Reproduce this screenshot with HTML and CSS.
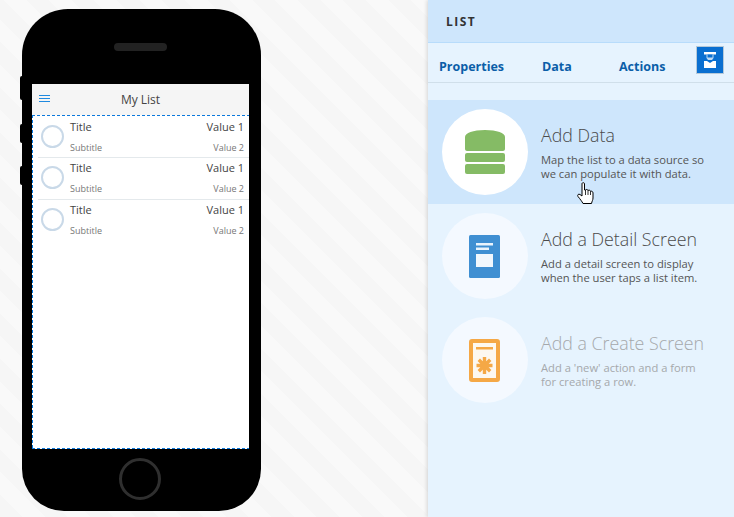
FILE: index.html
```html
<!DOCTYPE html>
<html lang="en">
<head>
    <meta charset="UTF-8">
    <meta name="viewport" content="width=device-width, initial-scale=1.0">
    <title>My List</title>
    <link rel="stylesheet" href="styles.css">
</head>
<body>
    <div class="stage">
        <div class="phone">
            <span class="side-btn side-btn-1"></span>
            <span class="side-btn side-btn-2"></span>
            <span class="side-btn side-btn-3"></span>
            <div class="speaker"></div>
            <div class="screen">
                <div class="screen-head">
                    <span class="menu-icon"><i></i><i></i><i></i></span>
                    <span class="screen-title">My List</span>
                </div>
                <div class="list">
                    <div class="row">
                        <span class="avatar"></span>
                        <div class="row-text">
                            <div class="row-line"><span>Title</span><span>Value 1</span></div>
                            <div class="row-line row-sub"><span>Subtitle</span><span>Value 2</span></div>
                        </div>
                    </div>
                    <div class="row">
                        <span class="avatar"></span>
                        <div class="row-text">
                            <div class="row-line"><span>Title</span><span>Value 1</span></div>
                            <div class="row-line row-sub"><span>Subtitle</span><span>Value 2</span></div>
                        </div>
                    </div>
                    <div class="row">
                        <span class="avatar"></span>
                        <div class="row-text">
                            <div class="row-line"><span>Title</span><span>Value 1</span></div>
                            <div class="row-line row-sub"><span>Subtitle</span><span>Value 2</span></div>
                        </div>
                    </div>
                </div>
            </div>
            <div class="home-btn"></div>
        </div>
    </div>

    <div class="panel">
        <div class="panel-head">LIST</div>
        <div class="tabs">
            <a class="tab tab-props">Properties</a>
            <a class="tab tab-data">Data</a>
            <a class="tab tab-actions">Actions</a>
            <button class="tab-icon">
                <svg width="12" height="16" viewBox="0 0 12 16">
                    <path d="M0 0h12v2.500h-12z" fill="#fff"/>
                    <path d="M2.500 2.500h7v3.500l-1.500 2h-4l-1.500-2z" fill="#bcd9f4"/>
                    <path d="M3.500 2.500h5v3h-5z" fill="#0a6fd0"/>
                    <path d="M0 9h3l3 2 3-2h3v7h-12z" fill="#fff"/>
                </svg>
            </button>
        </div>

        <div class="actions">
            <div class="action action-active">
                <div class="action-circle">
                    <svg width="40" height="44" viewBox="0 0 40 44">
                        <path d="M0 19v-12c0-4 8-7 20-7s20 3 20 7v12c0 1-1 2-2 2h-36c-1 0-2-1-2-2z" fill="#85bb65"/>
                        <rect x="0" y="23" width="40" height="9" rx="2" fill="#85bb65"/>
                        <rect x="0" y="34" width="40" height="10" rx="2" fill="#85bb65"/>
                    </svg>
                </div>
                <div class="action-text">
                    <h3>Add Data</h3>
                    <p>Map the list to a data source so<br>we can populate it with data.</p>
                </div>
            </div>

            <div class="action">
                <div class="action-circle">
                    <svg class="doc-icon" width="31" height="43" viewBox="0 0 31 43">
                        <rect width="31" height="43" rx="1.500" fill="#3f8fd2"/>
                        <rect x="7" y="8" width="17" height="2.500" fill="#e9f3fc"/>
                        <rect x="7" y="12.500" width="13" height="2.500" fill="#e9f3fc"/>
                        <rect x="7" y="19" width="17" height="13" fill="#f1f7fd"/>
                    </svg>
                </div>
                <div class="action-text">
                    <h3>Add a Detail Screen</h3>
                    <p>Add a detail screen to display<br>when the user taps a list item.</p>
                </div>
            </div>

            <div class="action action-disabled">
                <div class="action-circle">
                    <svg class="doc-icon" width="31" height="43" viewBox="0 0 31 43">
                        <rect x="2" y="2" width="27" height="39" rx="1" fill="#fdf8f0" stroke="#f5a846" stroke-width="4"/>
                        <rect x="7" y="8" width="17" height="2.500" fill="#f5a846"/>
                        <g stroke="#f5a846" stroke-width="3.400">
                            <path d="M15.500 18v17M7.500 26.500h16M9.800 20.800l11.400 11.400M21.200 20.800l-11.400 11.400"/>
                        </g>
                    </svg>
                </div>
                <div class="action-text">
                    <h3>Add a Create Screen</h3>
                    <p>Add a 'new' action and a form<br>for creating a row.</p>
                </div>
            </div>
        </div>

        <svg class="cursor" width="18" height="23" viewBox="0 0 18 23">
            <path d="M5 1.500c0-1 2.500-1 2.500 0v6.500l1 0c1-1 2.300-.5 2.500.5 1-.7 2.300-.3 2.500.8 1.200-.5 2.500.2 2.500 1.700v5c0 2-1 3-1.500 5.500h-8.500c-1-2-3-4.500-5-7-1-1.500.5-3 2-2l2 1.500z" fill="#fff" stroke="#000" stroke-width="1"/>
            <path d="M8.500 8v5M11 8.500v4.500M13.500 9.300v3.700" stroke="#000" stroke-width=".8" fill="none"/>
        </svg>
    </div>
</body>
</html>
```

FILE: styles.css
```css
* {
    box-sizing: border-box;
}
html, body {
    height: 100%;
}
body {
    margin: 0;
    display: flex;
    overflow: hidden;
    font-family: "Open Sans", "Noto Sans", Arial, sans-serif;
    color: #333;
}

/* left side with the phone */
.stage {
    width: 428px;
    height: 517px;
    padding: 9px 0 0 22px;
    background: repeating-linear-gradient(45deg, #f6f6f6 0, #f6f6f6 16px, #f9f9f9 16px, #f9f9f9 32px);
}
.phone {
    position: relative;
    width: 239px;
    height: 502px;
    padding: 34px 0 0 10px;
    background: #000;
    border-radius: 46px 46px 42px 42px;
}
.side-btn {
    position: absolute;
    left: -2px;
    width: 2px;
    background: #000;
    border-radius: 2px 0 0 2px;
}
.side-btn-1 {
    top: 67px;
    height: 24px;
}
.side-btn-2 {
    top: 115px;
    height: 19px;
}
.side-btn-3 {
    top: 157px;
    height: 19px;
}
.speaker {
    width: 53px;
    height: 8px;
    margin-left: 82px;
    background: #222;
    border-radius: 4px;
}
.screen {
    width: 217px;
    height: 365px;
    margin-top: 33px;
    background: #fff;
    overflow: hidden;
}
.screen-head {
    display: flex;
    align-items: center;
    justify-content: center;
    position: relative;
    height: 31px;
    background: #f5f5f5;
}
.screen-title {
    font-size: 12px;
    color: #444;
}
.menu-icon {
    position: absolute;
    left: 7px;
    top: 11px;
    width: 11px;
}
.menu-icon i {
    display: block;
    height: 1px;
    margin-bottom: 2px;
    background: #1f8ae0;
}
/* selection outline, drawn so the dash length is 3 on / 2 off */
.list {
    height: 334px;
    padding: 2px 0 0 1px;
    background:
        repeating-linear-gradient(90deg, #0a78dc 0 3px, transparent 3px 5px) top / 100% 1px no-repeat,
        repeating-linear-gradient(90deg, #0a78dc 0 3px, transparent 3px 5px) bottom / 100% 1px no-repeat,
        repeating-linear-gradient(180deg, #0a78dc 0 3px, transparent 3px 5px) left / 1px 100% no-repeat;
}
.row {
    display: flex;
    height: 41.3px;
    margin-left: 5px;
    padding-right: 5px;
    border-bottom: 1px solid #e4e9ec;
}
.row:last-child {
    border-bottom: none;
}
.avatar {
    flex: none;
    width: 23px;
    height: 23px;
    margin: 8px 6px 0 3px;
    border: 2px solid #c9d9e8;
    border-radius: 50%;
}
.row-text {
    flex: 1;
    padding-top: 2px;
}
.row-line {
    display: flex;
    justify-content: space-between;
    height: 16px;
    line-height: 16px;
    font-size: 11px;
    color: #444;
}
.row-sub {
    margin-top: 5px;
    font-size: 9px;
    color: #777;
}
.home-btn {
    width: 42px;
    height: 42px;
    margin: 9px 0 0 87px;
    border: 3px solid #2f2f2f;
    border-radius: 50%;
}

/* right side panel */
.panel {
    position: relative;
    width: 306px;
    height: 517px;
    background: #e6f3fe;
    box-shadow: -1px 0 4px rgba(0, 0, 0, .15);
}
.panel-head {
    height: 43px;
    padding-left: 18px;
    line-height: 43px;
    font-size: 12px;
    font-weight: 700;
    letter-spacing: 1.5px;
    color: #333;
    background: #cee6fc;
    border-bottom: 1px solid #b8dcfb;
}
.tabs {
    display: flex;
    align-items: center;
    height: 40px;
    border-bottom: 1px solid #d0dfea;
}
.tab {
    margin-top: 8px;
    font-size: 12.5px;
    font-weight: 700;
    color: #0b5ea8;
}
.tab-props {
    margin-left: 11px;
    width: 103px;
}
.tab-data {
    width: 77px;
}
.tab-actions {
    width: 77px;
}
.tab-icon {
    display: flex;
    align-items: center;
    justify-content: center;
    width: 28px;
    height: 28px;
    margin-top: -6px;
    padding: 0;
    background: #0a6fd0;
    border: 1px solid #b5c9d9;
}
.actions {
    margin-top: 17px;
}
.action {
    display: flex;
    align-items: flex-start;
    height: 104px;
    padding: 9px 0 0 14px;
}
.action-active {
    background: #cee6fc;
}
.action-circle {
    flex: none;
    display: flex;
    align-items: center;
    justify-content: center;
    width: 86px;
    height: 86px;
    background: #f4f9ff;
    border-radius: 50%;
}
.action-active .action-circle {
    background: #fff;
}
.doc-icon {
    margin-right: 1px;
}
.action-text {
    margin-left: 13px;
    padding-top: 11px;
}
.action-text h3 {
    margin: 0;
    font-size: 17.8px;
    font-weight: 300;
    line-height: 30px;
    color: #4a4a4a;
}
.action-text p {
    margin: 3px 0 0;
    font-size: 11.2px;
    line-height: 14px;
    color: #555;
}
.action-disabled h3,
.action-disabled p {
    color: #a5a8ab;
}
.cursor {
    position: absolute;
    left: 149px;
    top: 182px;
}
```
